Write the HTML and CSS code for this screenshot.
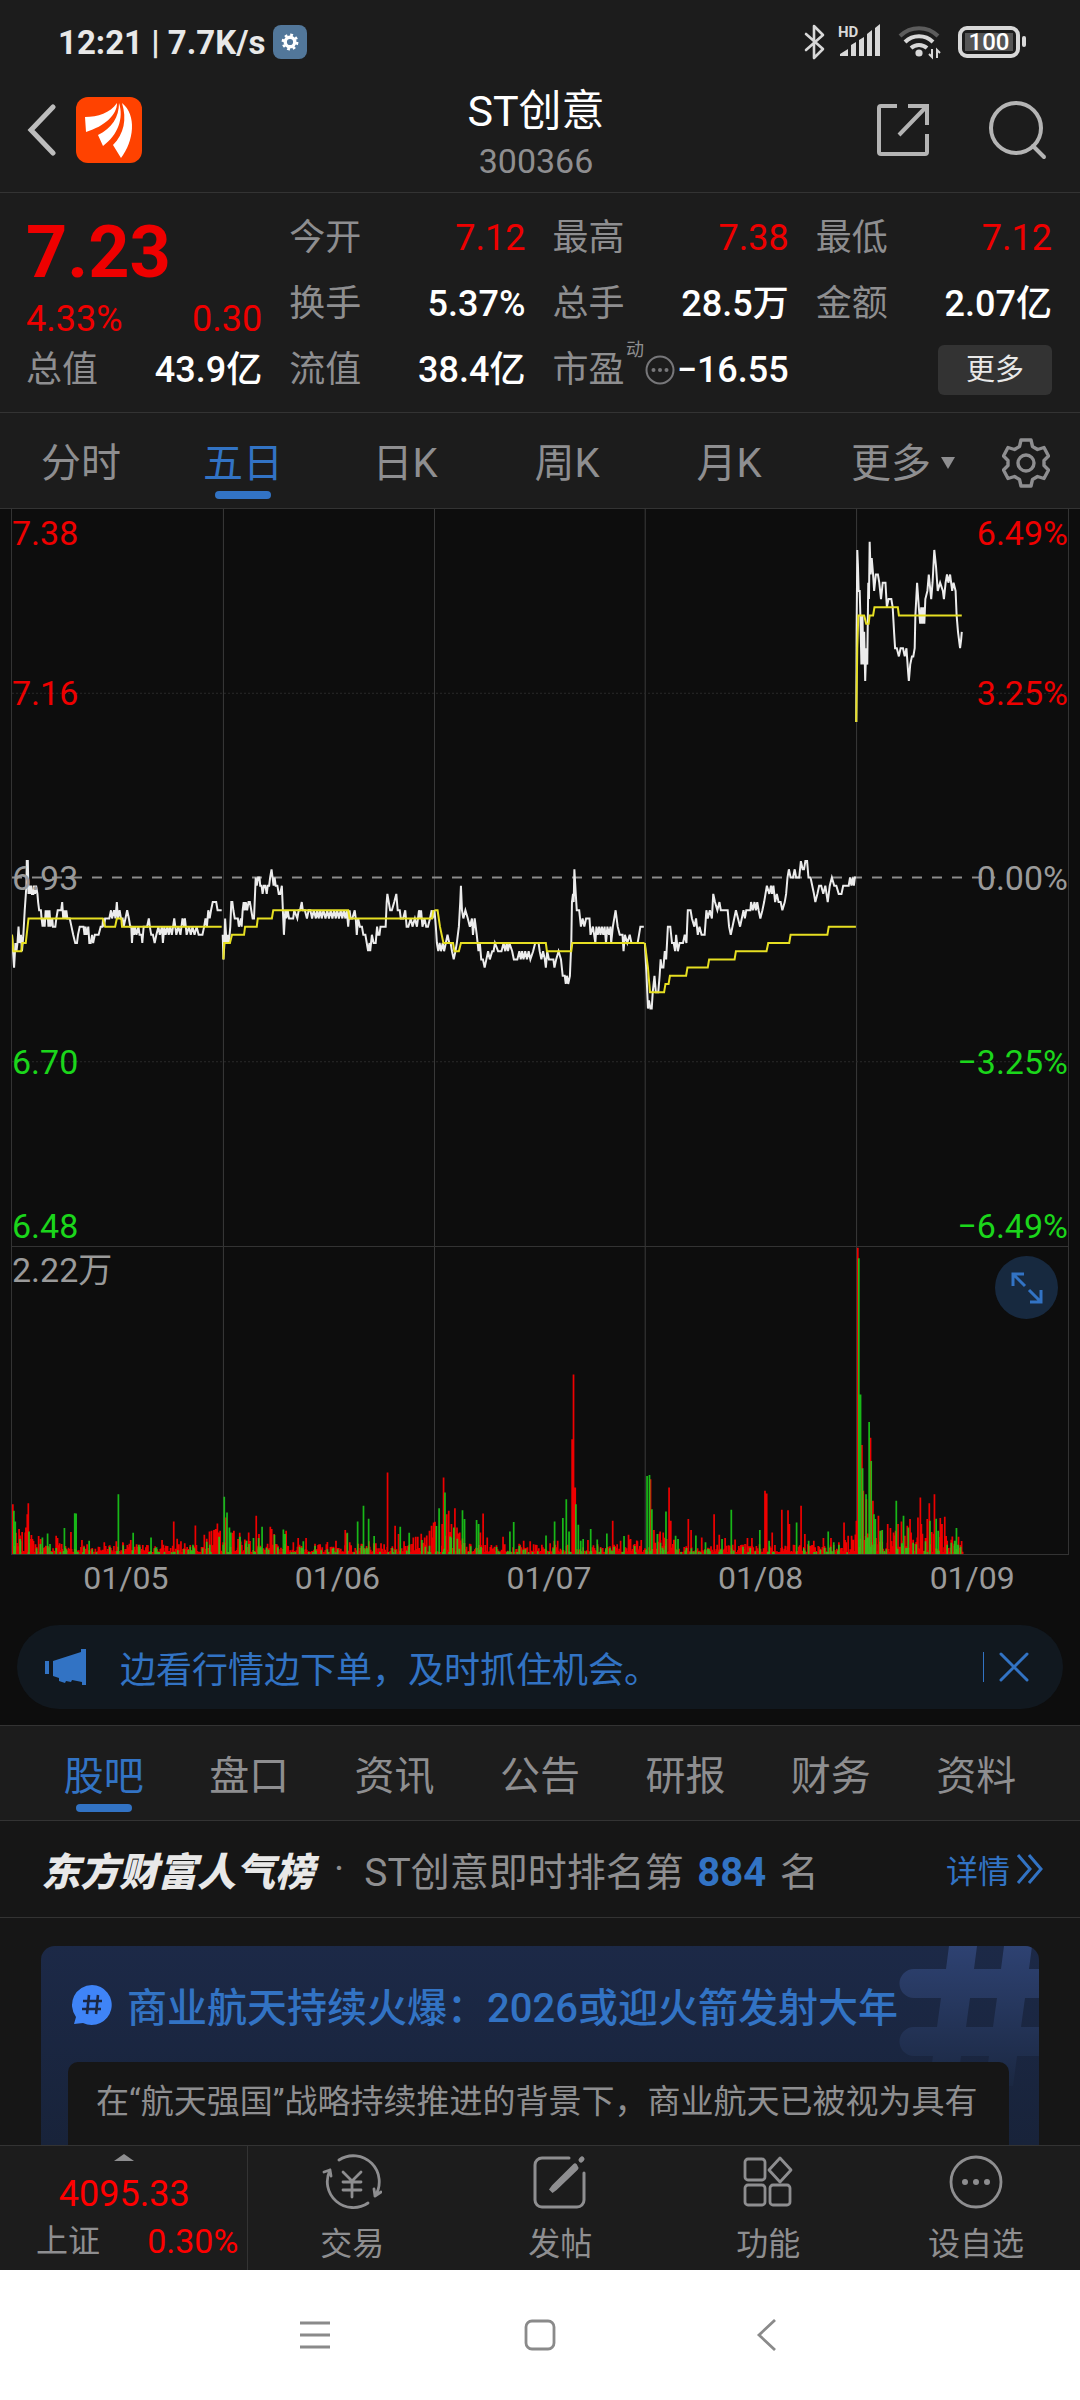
FILE: index.html
```html
<!DOCTYPE html>
<html lang="zh-CN">

<head>
    <meta charset="UTF-8">
    <meta name="viewport" content="width=device-width, initial-scale=1.0">
    <title>ST创意 300366</title>
    <link rel="stylesheet" href="styles.css">
</head>

<body>
    <div class="app">
        <div class="statusbar">
            <span class="time">12:21 | 7.7K/s</span>
            <span class="badge">
                <svg width="18" height="18" viewBox="0 0 18 18"><circle cx="9" cy="9" r="4.8" fill="none" stroke="#fff" stroke-width="3.4"/><circle cx="9" cy="9" r="7.2" fill="none" stroke="#fff" stroke-width="2.4" stroke-dasharray="2.8 2.85"/></svg>
            </span>
            <span class="status-icons">
                <svg width="22" height="36" viewBox="0 0 22 36" fill="none" stroke="#d8d8d8" stroke-width="2.6" stroke-linejoin="round" stroke-linecap="round"><path d="M2 10l17 15-9 9V2l9 9L2 26"/></svg>
                <svg class="signal" width="44" height="36" viewBox="0 0 44 36" fill="#d8d8d8"><text x="0" y="13" class="hd">HD</text><path d="M2 32v-2l8-5v7zM13 32V21l5-3v14zM21 32V16l5-3v19zM29 32V10l5-4v26zM37 32V4l5-4v32z"/></svg>
                <svg class="wifi" width="44" height="36" viewBox="0 0 44 36" fill="none" stroke-width="4"><path d="M2 12a27 27 0 0 1 38 0" stroke="#5c5c5c"/><path d="M7 18a20 20 0 0 1 28 0M13 24a12 12 0 0 1 16 0" stroke="#d8d8d8"/><circle cx="21" cy="29" r="3.6" fill="#d8d8d8"/><path d="M34 25v8l-3-3M39 34v-8l3 3" stroke="#d8d8d8" stroke-width="2"/></svg>
                <span class="battery"><span>100</span></span>
            </span>
        </div>

        <header class="header">
            <div class="header-side">
                <button class="icon-btn" aria-label="返回"><svg width="32" height="54" viewBox="0 0 32 54" fill="none" stroke="#bdbdbd" stroke-width="5" stroke-linecap="round"><path d="M29 4L7 27l22 23"/></svg></button>
                <a class="logo" href="#" aria-label="东方财富"><svg width="66" height="66" viewBox="0 0 66 66"><rect width="66" height="66" rx="12" fill="#ff4200"/><g fill="#fff"><path d="M9 20C22 20 34 16 41 6c0 12-12 23-31 29z"/><path d="M43 6c5 15-1 32-16 43l-5-11C36 31 43 20 43 6z"/><path d="M46 6c15 12 12 38-1 55l-8-13c11-11 14-26 9-42z"/></g></svg></a>
            </div>
            <div class="header-title">
                <h1>ST创意</h1>
                <p>300366</p>
            </div>
            <div class="header-side right">
                <button class="icon-btn" aria-label="分享"><svg width="54" height="54" viewBox="0 0 54 54" fill="none" stroke="#b4b4b4" stroke-width="4"><path d="M21 3H5a2 2 0 0 0-2 2v44a2 2 0 0 0 2 2h44a2 2 0 0 0 2-2V31M32 3h19v19M51 3L23 32"/></svg></button>
                <button class="icon-btn" aria-label="搜索"><svg width="60" height="60" viewBox="0 0 60 60" fill="none" stroke="#b4b4b4" stroke-width="4" stroke-linecap="round"><circle cx="28" cy="28" r="25"/><path d="M45 46l11 11"/></svg></button>
            </div>
        </header>

        <section class="quote">
            <div class="quote-col">
                <strong class="price up">7.23</strong>
                <div class="change up"><span>4.33%</span><span>0.30</span></div>
                <div class="cell"><span>总值</span><b>43.9亿</b></div>
            </div>
            <div class="quote-col">
                <div class="cell"><span>今开</span><b class="up">7.12</b></div>
                <div class="cell"><span>换手</span><b>5.37%</b></div>
                <div class="cell"><span>流值</span><b>38.4亿</b></div>
            </div>
            <div class="quote-col">
                <div class="cell"><span>最高</span><b class="up">7.38</b></div>
                <div class="cell"><span>总手</span><b>28.5万</b></div>
                <div class="cell pe"><span>市盈</span><small>动</small><svg width="30" height="30" viewBox="0 0 30 30"><circle cx="15" cy="15" r="13.5" fill="none" stroke="#77777a" stroke-width="2"/><g fill="#77777a"><circle cx="8.5" cy="15" r="2"/><circle cx="15" cy="15" r="2"/><circle cx="21.5" cy="15" r="2"/></g></svg><b>−16.55</b></div>
            </div>
            <div class="quote-col">
                <div class="cell"><span>最低</span><b class="up">7.12</b></div>
                <div class="cell"><span>金额</span><b>2.07亿</b></div>
                <div class="cell end"><button class="more-btn">更多</button></div>
            </div>
        </section>

        <nav class="tabs period-tabs">
            <button>分时</button>
            <button class="active">五日</button>
            <button>日K</button>
            <button>周K</button>
            <button>月K</button>
            <button class="more-tab">更多<i class="caret"></i></button>
            <button class="gear" aria-label="设置"><svg width="48" height="50" viewBox="0 0 48 50" fill="none" stroke="#8e8e90" stroke-width="3.4" stroke-linejoin="round"><path d="M19 2h10l1.500 6.500 5 3 6.500-2 4.500 8.500-4.500 4.500v5l4.500 4.500-4.500 8.500-6.500-2-5 3L29 48H19l-1.500-6.500-5-3-6.500 2L1.500 32 6 27.500v-5L1.500 18 6 9.500l6.500 2 5-3z"/><circle cx="24" cy="25" r="8"/></svg></button>
        </nav>

        <section class="chart">
            <div class="panel price-panel">
                <svg class="plot" viewBox="0 0 3072 90" preserveAspectRatio="none">
                    <path class="grid-line" d="M615 0V90M1229 0V90M1842 0V90M2457 0V90"/>
                    <path class="grid-dot" d="M0 22.500H3072M0 67.500H3072"/>
                    <path class="mid-line" d="M0 45H2860"/>
                    <g id="lines"></g>
                </svg>
                <div class="axis left">
                    <span class="up">7.38</span><span class="up">7.16</span><span>6.93</span><span class="down">6.70</span><span class="down">6.48</span>
                </div>
                <div class="axis right">
                    <span class="up">6.49%</span><span class="up">3.25%</span><span>0.00%</span><span class="down">−3.25%</span><span class="down">−6.49%</span>
                </div>
            </div>
            <div class="panel volume-panel">
                <svg class="plot" viewBox="0 0 3072 924" preserveAspectRatio="none">
                    <path class="grid-line" d="M615 0V924M1229 0V924M1842 0V924M2457 0V924"/>
                    <path class="bars-up" id="barsUp"/>
                    <path class="bars-down" id="barsDown"/>
                </svg>
                <span class="volume-max">2.22万</span>
                <button class="expand" aria-label="全屏"><svg width="32" height="32" viewBox="0 0 32 32" fill="none" stroke="#3273c4" stroke-width="3"><path d="M13 2H2v12M2 2l12 12M19 30h11V18M30 30L18 18"/></svg></button>
            </div>
            <div class="dates"><span>01/05</span><span>01/06</span><span>01/07</span><span>01/08</span><span>01/09</span></div>
            <div class="notice">
                <svg width="42" height="36" viewBox="0 0 42 36" fill="#3273c4"><path d="M0 12h4v13H0zM8 12L36 3V0h5v36h-4v-3l-10-2-1 2-5-1-1 2-6-2v-3l-6-2z"/></svg>
                <a href="#">边看行情边下单，及时抓住机会。</a>
                <button class="close" aria-label="关闭"><svg width="30" height="30" viewBox="0 0 30 30" fill="none" stroke="#3273c4" stroke-width="3" stroke-linecap="round"><path d="M2 2l26 26M28 2L2 28"/></svg></button>
            </div>
        </section>

        <nav class="tabs info-tabs">
            <button class="active">股吧</button>
            <button>盘口</button>
            <button>资讯</button>
            <button>公告</button>
            <button>研报</button>
            <button>财务</button>
            <button>资料</button>
        </nav>

        <div class="rank">
            <em>东方财富人气榜</em>
            <span class="dot">·</span>
            <span>ST创意即时排名第 <b>884</b> 名</span>
            <a href="#">详情<svg width="28" height="30" viewBox="0 0 28 30" fill="none" stroke="#3273c4" stroke-width="3"><path d="M2 1l12 14L2 29M13 1l12 14-12 14"/></svg></a>
        </div>

        <section class="feed">
            <article class="topic">
                <svg class="hash" width="140" height="140" viewBox="0 0 140 140"><defs><linearGradient id="hashFill" x1="0" y1="0" x2="0" y2="1"><stop offset="0" stop-color="#2e4272"/><stop offset="1" stop-color="#1b2842"/></linearGradient></defs><path fill="url(#hashFill)" d="M50 0h28l-3 23h27l3-23h28l-3 23h10v29h-14l-4 29h18v29h-22l-4 30H86l4-30H62l-4 30H30l4-30H15a14 14 0 0 1 0-29h23l4-29H15a14 14 0 0 1 0-29h32zM71 52l-4 29h27l4-29z"/></svg>
                <h2>
                    <svg width="42" height="42" viewBox="0 0 42 42"><path fill="#3f84f7" d="M21 1a20 20 0 1 1-9 38l-9 1 2-7A20 20 0 0 1 21 1z"/><path stroke="#1b2743" stroke-width="2.600" fill="none" d="M18 11l-2 19M27 11l-2 19M12 17h19M11 25h19"/></svg>
                    <a href="#">商业航天持续火爆：2026或迎火箭发射大年</a>
                </h2>
                <p>在“航天强国”战略持续推进的背景下，商业航天已被视为具有</p>
            </article>
        </section>

        <footer class="toolbar">
            <a class="index" href="#">
                <i class="arrow-up"></i>
                <strong>4095.33</strong>
                <span class="index-row"><span>上证</span><b>0.30%</b></span>
            </a>
            <button class="tool">
                <svg width="60" height="56" viewBox="0 0 60 56" fill="none" stroke="#8e8e90" stroke-width="2.800" stroke-linecap="round" stroke-linejoin="round"><path d="M17 6a26 26 0 0 1 36 36M53 42l-1-7M53 42l6-4M46 49A26 26 0 0 1 8 16M8 16l-6 2M8 16l1 6"/><path d="M21 18l9 9 9-9M30 27v16M21 28h18M21 36h18"/></svg>
                <span>交易</span>
            </button>
            <button class="tool">
                <svg width="56" height="56" viewBox="0 0 56 56" fill="none" stroke="#8e8e90" stroke-width="3" stroke-linecap="round"><path d="M37 4H10a7 7 0 0 0-7 7v35a7 7 0 0 0 7 7h35a7 7 0 0 0 7-7V19"/><path d="M43 12L22 33l-3 4 4-3 21-20M50 5l-1 1" stroke-width="5"/></svg>
                <span>发帖</span>
            </button>
            <button class="tool">
                <svg width="52" height="56" viewBox="0 0 52 56" fill="none" stroke="#8e8e90" stroke-width="2.800" stroke-linejoin="round"><rect x="3" y="5" width="20" height="21" rx="3"/><rect x="3" y="31" width="20" height="20" rx="3"/><rect x="28" y="31" width="20" height="20" rx="3"/><path d="M38 4l11 12-11 12-11-12z"/></svg>
                <span>功能</span>
            </button>
            <button class="tool">
                <svg width="56" height="56" viewBox="0 0 56 56"><circle cx="28" cy="28" r="25" fill="none" stroke="#8e8e90" stroke-width="2.800"/><g fill="#8e8e90"><circle cx="17" cy="28" r="3"/><circle cx="28" cy="28" r="3"/><circle cx="39" cy="28" r="3"/></g></svg>
                <span>设自选</span>
            </button>
        </footer>

        <div class="sysnav">
            <button aria-label="菜单"><svg width="32" height="32" viewBox="0 0 32 32" stroke="#8a8a8a" stroke-width="2.800"><path d="M1 4h30M1 16h30M1 28h30"/></svg></button>
            <button aria-label="主页"><svg width="32" height="32" viewBox="0 0 32 32" fill="none" stroke="#8a8a8a" stroke-width="2.800"><rect x="2" y="2" width="28" height="28" rx="6"/></svg></button>
            <button aria-label="返回"><svg width="32" height="32" viewBox="0 0 32 32" fill="none" stroke="#8a8a8a" stroke-width="2.800"><path d="M26 1L10 16l16 15"/></svg></button>
        </div>
    </div>

    <script src="chart.js"></script>
</body>

</html>
```
FILE: styles.css
```css
* {
    margin: 0;
    padding: 0;
    box-sizing: border-box;
}

body {
    background-color: #1c1c1c;
    color: #8e8e90;
    font-family: Roboto, "Noto Sans CJK SC", sans-serif;
    font-size: 36px;
}

button {
    font: inherit;
    color: inherit;
    background: none;
    border: none;
}

a {
    color: inherit;
    text-decoration: none;
}

svg {
    display: block;
    flex-shrink: 0;
}

.app {
    display: flex;
    flex-direction: column;
    min-height: 100vh;
}

.up {
    color: #ee0000;
}

.down {
    color: #1bd61b;
}

/* status bar */

.statusbar {
    display: flex;
    align-items: center;
    height: 84px;
    padding: 0 60px 0 58px;
    color: #e8e8e8;
}

.time {
    font-size: 33px;
    font-weight: 700;
}

.badge {
    display: flex;
    align-items: center;
    justify-content: center;
    width: 34px;
    height: 34px;
    margin-left: 8px;
    border-radius: 8px;
    background-color: #52779a;
}

.status-icons {
    display: flex;
    align-items: center;
    gap: 12px;
    margin-left: auto;
}

.wifi {
    margin: 0 4px;
}

.hd {
    font-size: 15px;
    font-weight: 700;
}

.battery {
    position: relative;
    padding: 3px;
    border: 4px solid #d8d8d8;
    border-radius: 9px;
}

.battery span {
    display: block;
    width: 48px;
    background-color: #555;
    color: #fff;
    font-size: 24px;
    font-weight: 500;
    line-height: 18px;
    text-align: center;
}

.battery::after {
    content: "";
    position: absolute;
    right: -10px;
    top: 6px;
    width: 4px;
    height: 11px;
    border-radius: 2px;
    background-color: #d8d8d8;
}

/* header */

.header {
    display: flex;
    align-items: center;
    justify-content: space-between;
    height: 109px;
    padding: 0 32px 16px 24px;
    border-bottom: 1px solid #333;
}

.header-side {
    display: flex;
    align-items: center;
    flex: 1;
    gap: 20px;
}

.header-side.right {
    justify-content: flex-end;
    gap: 58px;
}

.header-title {
    padding-top: 6px;
    text-align: center;
}

.header-title h1 {
    color: #fff;
    font-size: 43px;
    font-weight: 400;
    line-height: 56px;
}

.header-title p {
    font-size: 34px;
    line-height: 44px;
}

/* quote */

.quote {
    display: grid;
    grid-template-columns: repeat(4, 1fr);
    column-gap: 27px;
    padding: 12px 28px 9px 26px;
    border-bottom: 1px solid #333;
}

.price {
    display: block;
    font-size: 72px;
    line-height: 96px;
}

.change {
    display: flex;
    justify-content: space-between;
    line-height: 36px;
}

.cell {
    display: flex;
    align-items: center;
    justify-content: space-between;
    height: 66px;
    line-height: 66px;
    white-space: nowrap;
}

.cell b {
    color: #fff;
    font-weight: 500;
}

.cell b.up {
    color: #ee0000;
    font-weight: 400;
}

.cell.end {
    justify-content: flex-end;
}

.pe small {
    align-self: flex-start;
    font-size: 18px;
    line-height: 26px;
}

.more-btn {
    width: 114px;
    height: 50px;
    border-radius: 6px;
    background-color: #333;
    color: #e8e8e8;
    font-size: 29px;
    line-height: 50px;
}

/* tabs */

.tabs {
    display: grid;
    grid-template-columns: repeat(7, 1fr);
    height: 96px;
    border-bottom: 1px solid #333;
    font-size: 40px;
}

.tabs button {
    display: flex;
    flex-direction: column;
    align-items: center;
    line-height: 60px;
    padding-top: 21px;
}

.tabs .active {
    color: #3273c4;
}

.tabs .active::after {
    content: "";
    width: 56px;
    height: 8px;
    margin-top: -3px;
    border-radius: 4px;
    background-color: #3273c4;
}

.period-tabs {
    grid-template-columns: repeat(6, 1fr) 108px;
}

.period-tabs .more-tab {
    flex-direction: row;
    justify-content: center;
    align-items: flex-start;
    gap: 10px;
    padding-left: 24px;
}

.caret {
    margin-top: 23px;
    border: 7px solid transparent;
    border-top: 12px solid #8e8e90;
    border-bottom: none;
}

.period-tabs .gear {
    justify-content: center;
    padding-top: 4px;
}

.info-tabs {
    padding: 0 31px;
    border-top: 1px solid #333;
}

/* chart */

.chart {
    background-color: #0d0d0d;
    padding: 0 11px 16px;
}

.panel {
    display: grid;
    border: 1px solid #333;
    border-top: none;
    font-size: 34px;
}

.price-panel {
    height: 738px;
    color: #9a9a9a;
}

.volume-panel {
    height: 308px;
    color: #9a9a9a;
}

/* plot and labels share one grid cell */
.panel > * {
    grid-area: 1 / 1;
    min-width: 0;
    min-height: 0;
}

.plot {
    width: 100%;
    height: 100%;
}

.plot path,
.plot polyline {
    vector-effect: non-scaling-stroke;
    fill: none;
}

.grid-line {
    stroke: #3a3a3a;
}

.grid-dot {
    stroke: #2a2a2a;
    stroke-dasharray: 2 2;
}

.mid-line {
    stroke: #8c8c8c;
    stroke-width: 2px;
    stroke-dasharray: 10 10;
}

.plot .avg {
    stroke: #e6df22;
    stroke-width: 2px;
}

.plot .last {
    stroke: #ececec;
    stroke-width: 2px;
}

.plot .bars-up {
    fill: #ee0000;
}

.plot .bars-down {
    fill: #1bd61b;
    fill-opacity: 0.85;
}

.axis {
    display: grid;
    grid-template-rows: 1fr 2fr 2fr 2fr 1fr;
    align-items: center;
    line-height: 40px;
}

.axis.right {
    text-align: right;
}

.axis span:first-child {
    align-self: start;
    padding-top: 4px;
}

.axis span:last-child {
    align-self: end;
}

.volume-max {
    line-height: 46px;
}

.expand {
    display: flex;
    align-items: center;
    justify-content: center;
    justify-self: end;
    width: 63px;
    height: 63px;
    margin: 9px 10px;
    border-radius: 50%;
    background-color: #17293f;
}

.dates {
    display: grid;
    grid-template-columns: repeat(5, 1fr);
    height: 70px;
    font-size: 32px;
    line-height: 46px;
    text-align: center;
    color: #9a9a9a;
}

.dates span {
    padding-left: 18px;
}

.notice {
    display: flex;
    align-items: center;
    height: 84px;
    margin: 0 6px;
    padding: 0 34px 0 28px;
    border-radius: 42px;
    background-color: #11181f;
    color: #3273c4;
}

.notice a {
    flex: 1;
    margin-left: 33px;
}

.close {
    padding-left: 15px;
    border-left: 1px solid #3273c4;
}

/* popularity rank */

.rank {
    display: flex;
    align-items: center;
    height: 97px;
    padding: 0 36px 0 41px;
    border-bottom: 1px solid #333;
    background-color: #161616;
    font-size: 39px;
    white-space: nowrap;
}

.rank em {
    color: #e8e8e8;
    font-weight: 900;
}

.rank .dot {
    margin: 0 20px;
}

.rank b {
    margin: 0 4px;
    color: #3273c4;
    font-size: 40px;
}

.rank a {
    display: flex;
    align-items: center;
    gap: 6px;
    margin-left: auto;
    color: #3273c4;
    font-size: 32px;
}

/* feed */

.feed {
    display: flex;
    flex: 1;
    padding: 28px 41px 0;
    background-color: #161616;
}

.topic {
    position: relative;
    display: flex;
    flex: 1;
    flex-direction: column;
    padding: 29px 30px 0 27px;
    border-radius: 14px 14px 0 0;
    overflow: hidden;
    background: linear-gradient(#1c2947, #18233a);
}

.hash {
    position: absolute;
    top: 0;
    right: 0;
}

.topic h2 {
    position: relative;
    display: flex;
    align-items: center;
    gap: 14px;
    height: 60px;
    margin: 0 0 27px 3px;
    color: #3273c4;
    font-size: 40px;
    font-weight: 500;
    white-space: nowrap;
}

.topic p {
    position: relative;
    flex: 1;
    padding: 16px 20px 18px 28px;
    border-radius: 10px 10px 0 0;
    background-color: #161616;
    font-size: 33px;
    line-height: 48px;
    white-space: nowrap;
}

/* bottom bar */

.toolbar {
    display: flex;
    height: 125px;
    border-top: 1px solid #333;
}

.index {
    display: flex;
    flex-direction: column;
    align-items: center;
    width: 23%;
    padding: 8px 9px 0 36px;
    border-right: 1px solid #333;
    color: #f00;
}

.index strong {
    padding-right: 26px;
    font-weight: 400;
    line-height: 66px;
}

.arrow-up {
    margin-right: 26px;
    border: 10px solid transparent;
    border-bottom: 7px solid #8e8e90;
    border-top: none;
}

.index-row {
    display: flex;
    justify-content: space-between;
    align-self: stretch;
    font-size: 34px;
    line-height: 28px;
}

.index-row span {
    color: #8e8e90;
    font-size: 32px;
}

.index-row b {
    font-weight: 400;
}

.tool {
    display: flex;
    flex: 1;
    flex-direction: column;
    align-items: center;
    padding-top: 8px;
    font-size: 32px;
}

.tool span {
    line-height: 68px;
}

.sysnav {
    display: flex;
    justify-content: center;
    height: 130px;
    background-color: #fff;
}

.sysnav button {
    display: flex;
    align-items: center;
    justify-content: center;
    width: 225px;
}
```
FILE: chart.js
```js
// x runs 0..3072 over five sessions, y is the distance from 6.93 in steps of 0.01
const last = [
    "0,-7 3,-9 6,-11 10,-8 13,-9 16,-8 19,-6 22,-8 26,-7 29,-9 33,-7 37,-4 42,-1 43,2 46,2 48,-2 51,-1 53,-2 56,-1 58,-2 62,-2 64,-1 67,-2 70,-1 74,-2 76,-3 79,-4 84,-4 86,-5 89,-6 92,-5 95,-6 98,-4 100,-5 103,-4 106,-6 109,-4 112,-6 117,-5 119,-6 126,-6 129,-5 133,-4 143,-4 146,-3 149,-5 152,-4 155,-5 158,-4 161,-5 168,-5 173,-6 178,-7 184,-8 189,-8 192,-7 197,-6 208,-6 211,-7 214,-6 217,-7 222,-6 225,-8 229,-8 233,-7 236,-8 241,-7 252,-7 258,-6 263,-6 265,-5 268,-6 271,-5 283,-5 288,-4 291,-5 297,-4 301,-5 305,-3 308,-5 313,-4 317,-5 322,-5 325,-6 330,-5 335,-4 340,-5 344,-6 347,-6 349,-8 352,-6 355,-7 358,-6 362,-7 368,-6 371,-7 377,-7 379,-8 383,-6 393,-6 398,-5 401,-6 405,-7 410,-7 415,-8 420,-7 426,-6 430,-7 436,-6 439,-8 443,-6 447,-7 452,-6 456,-7 460,-6 465,-7 472,-5 478,-7 484,-6 490,-7 496,-5 501,-6 503,-5 508,-7 515,-6 520,-7 525,-6 531,-7 537,-6 543,-7 554,-7 559,-6 563,-5 567,-6 571,-4 575,-5 579,-4 584,-3 594,-3 598,-4 610,-4",
    "613,-7 615,-10 618,-8 620,-5 624,-8 628,-7 631,-8 635,-6 638,-3 641,-3 644,-4 648,-5 657,-5 660,-6 666,-5 668,-6 671,-4 674,-3 677,-4 680,-3 684,-4 688,-3 692,-3 696,-4 700,-5 704,-5 706,-3 709,0 712,-1 716,0 720,0 722,-1 726,-1 729,-2 733,-1 737,-1 741,-2 744,-1 748,-1 751,0 755,1 758,0 761,-1 764,0 767,-1 772,-1 776,-2 780,-2 785,-1 788,-4 791,-7 795,-4 798,-5 802,-4 806,-5 818,-5 821,-4 830,-5 834,-4 838,-4 843,-3 846,-4 852,-4 858,-5 863,-4 868,-4 873,-5 878,-4 884,-5 888,-4 892,-5 897,-4 901,-5 906,-4 912,-5 917,-4 922,-5 927,-4 932,-5 937,-4 942,-5 946,-4 951,-5 956,-4 961,-5 965,-4 970,-5 974,-4 978,-6 982,-4 985,-5 990,-5 997,-4 1000,-5 1003,-7 1007,-5 1012,-6 1018,-6 1022,-7 1028,-7 1032,-8 1036,-9 1040,-8 1042,-9 1047,-7 1052,-8 1058,-8 1062,-6 1065,-7 1069,-7 1072,-6 1087,-6 1090,-3 1092,-2 1096,-3 1100,-4 1105,-4 1112,-3 1118,-2 1122,-4 1128,-4 1131,-5 1138,-5 1144,-4 1148,-6 1153,-6 1160,-5 1165,-6 1172,-5 1178,-6 1184,-4 1188,-5 1190,-4 1194,-6 1200,-5 1205,-6 1210,-6 1216,-5 1221,-4 1224,-5 1227,-4",
    "1229,-4 1233,-6 1236,-8 1240,-9 1244,-8 1248,-9 1253,-8 1257,-9 1262,-8 1267,-7 1272,-8 1276,-8 1280,-9 1285,-10 1290,-9 1294,-8 1300,-6 1304,-3 1306,-1 1309,-4 1313,-5 1319,-4 1326,-5 1332,-6 1338,-5 1341,-7 1346,-5 1352,-7 1357,-9 1361,-8 1365,-10 1370,-10 1375,-11 1380,-10 1385,-9 1390,-10 1397,-9 1401,-9 1405,-8 1414,-9 1424,-9 1430,-8 1435,-9 1439,-8 1443,-9 1447,-8 1455,-9 1460,-10 1470,-10 1476,-9 1480,-10 1484,-9 1488,-10 1493,-9 1498,-10 1503,-9 1508,-10 1516,-9 1522,-8 1532,-8 1535,-9 1540,-10 1545,-9 1550,-10 1553,-11 1557,-9 1562,-10 1575,-10 1578,-11 1583,-10 1590,-9 1597,-10 1602,-12 1608,-12 1611,-13 1614,-12 1618,-13 1623,-12 1627,-8 1629,-3 1632,-2 1634,-3 1636,1 1640,-2 1643,-4 1650,-4 1655,-6 1660,-5 1665,-6 1670,-5 1680,-5 1683,-7 1690,-6 1697,-8 1700,-6 1704,-7 1708,-6 1712,-7 1716,-6 1720,-7 1724,-6 1728,-8 1732,-6 1737,-7 1741,-6 1743,-8 1748,-6 1752,-5 1756,-4 1762,-6 1768,-7 1776,-7 1779,-9 1783,-7 1790,-8 1797,-7 1802,-8 1820,-8 1824,-7 1828,-6 1838,-6",
    "1841,-8 1846,-12 1850,-16 1853,-15 1857,-16 1861,-16 1864,-14 1869,-12 1873,-14 1880,-14 1884,-12 1887,-10 1890,-11 1895,-11 1899,-9 1903,-10 1908,-6 1915,-6 1920,-8 1925,-8 1929,-9 1932,-7 1937,-9 1942,-8 1952,-8 1957,-7 1962,-8 1966,-4 1974,-4 1978,-5 1985,-6 1990,-5 1995,-7 2000,-6 2006,-7 2015,-7 2020,-4 2024,-5 2030,-4 2036,-5 2040,-2 2045,-3 2052,-4 2058,-3 2062,-4 2082,-4 2086,-6 2091,-7 2096,-6 2101,-5 2106,-4 2112,-5 2118,-6 2123,-5 2128,-4 2132,-5 2136,-4 2148,-4 2150,-3 2155,-4 2160,-3 2164,-4 2168,-3 2172,-4 2177,-5 2183,-4 2188,-3 2192,-2 2196,-1 2203,-2 2208,-1 2211,-2 2215,-1 2220,-3 2225,-2 2230,-3 2236,-3 2241,-4 2248,-3 2252,-2 2256,0 2260,1 2265,0 2272,0 2277,1 2281,0 2290,0 2295,2 2300,1 2304,1 2308,2 2313,2 2317,0 2323,0 2328,-1 2333,-2 2337,-3 2343,-2 2348,-1 2354,-1 2360,-2 2366,-1 2373,-3 2379,-1 2385,0 2392,-1 2398,-1 2405,-2 2413,-2 2418,-1 2434,-1 2438,0 2442,-1 2446,0 2449,-1 2452,0 2455,0",
    "2456,19 2457,30 2459,40 2461,38 2463,35 2466,35 2468,32 2471,26 2474,32 2477,26 2479,30 2482,24 2485,28 2488,26 2491,36 2493,34 2495,41 2498,37 2501,39 2505,37 2508,35 2513,37 2519,37 2523,36 2528,34 2533,36 2541,36 2545,33 2550,34 2558,34 2562,33 2566,30 2569,28 2574,28 2580,27 2585,28 2592,28 2597,27 2602,28 2607,25 2609,24 2613,26 2618,27 2622,27 2626,28 2628,32 2633,36 2638,33 2642,31 2645,33 2648,31 2651,33 2654,31 2657,34 2663,35 2667,37 2674,34 2678,36 2683,40 2688,38 2693,35 2700,36 2708,35 2711,34 2716,36 2720,37 2724,36 2729,37 2735,35 2739,36 2745,35 2748,32 2752,30 2758,28 2761,29 2763,30"
];

const avg = [
    "0,-7 4,-9 27,-9 30,-8 40,-8 48,-5 264,-5 271,-6 300,-6 305,-5 318,-5 320,-6 610,-6",
    "615,-10 617,-8 634,-8 640,-7 675,-7 678,-6 712,-6 715,-5 756,-5 760,-4 978,-4 982,-5 1222,-5 1226,-4",
    "1229,-4 1238,-4 1245,-6 1255,-8 1283,-8 1287,-9 1300,-9 1306,-8 1553,-8 1556,-9 1627,-9 1630,-8 1840,-8",
    "1841,-8 1850,-11 1856,-14 1897,-14 1901,-13 1910,-13 1914,-12 1961,-12 1965,-11 2024,-11 2028,-10 2102,-10 2106,-9 2195,-9 2200,-8 2261,-8 2265,-7 2372,-7 2376,-6 2455,-6",
    "2456,19 2459,28 2462,32 2479,32 2485,31 2492,31 2495,32 2505,32 2509,33 2577,33 2580,32 2763,32"
];

// volume peaks, "x:height"
const volUp = "0:150 18:75 38:80 42:120 45:153 52:45 58:40 126:55 130:48 136:32 142:30 169:66 201:42 266:35 280:25 301:38 320:35 343:42 434:42 445:25 468:98 478:46 489:38 500:32 531:86 557:58 572:68 578:70 585:72 590:75 595:92 603:70 620:110 640:60 643:70 655:45 662:40 686:65 708:115 716:60 749:82 753:75 760:60 795:70 816:35 830:48 853:48 915:36 940:40 967:72 971:62 980:35 1036:38 1090:245 1112:85 1122:60 1138:38 1165:50 1172:52 1178:52 1198:50 1204:56 1212:70 1218:85 1224:95 1228:97 1249:90 1253:230 1262:120 1268:130 1276:90 1286:138 1292:80 1300:65 1360:65 1368:122 1380:50 1426:52 1486:40 1505:38 1575:40 1585:40 1627:345 1631:540 1636:200 1673:42 1745:100 1768:40 1817:38 1828:42 1855:225 1865:72 1883:68 1892:65 1909:200 1914:100 1965:105 1973:72 2004:50 2040:120 2055:58 2072:48 2101:44 2137:48 2150:48 2188:190 2193:182 2209:65 2237:133 2255:132 2259:90 2293:145 2304:60 2330:40 2358:48 2380:48 2418:95 2430:55 2440:55 2454:100 2458:922 2470:328 2474:190 2483:165 2495:350 2502:160 2518:115 2526:70 2545:90 2553:78 2568:70 2575:90 2585:98 2602:85 2610:105 2633:110 2640:170 2643:90 2660:105 2666:153 2681:180 2698:108 2703:90 2711:112 2718:40";
const volDown = "3:130 7:98 22:38 47:68 80:30 86:50 101:62 108:30 150:78 180:123 184:122 222:40 307:180 350:64 366:28 402:50 418:20 524:28 573:28 615:172 623:125 630:80 634:65 661:52 680:40 700:48 715:48 725:82 761:58 787:74 792:60 845:38 973:64 1003:98 1020:145 1035:106 1051:54 1127:82 1153:64 1190:42 1232:84 1240:138 1257:185 1275:50 1283:80 1308:132 1314:105 1349:102 1355:90 1446:68 1457:96 1474:25 1551:56 1576:98 1600:108 1610:165 1618:68 1638:150 1645:88 1652:40 1659:45 1681:75 1700:44 1728:62 1778:54 1845:235 1852:238 1859:135 1875:60 1900:128 1928:55 1935:45 1987:56 2015:35 2063:45 2090:133 2173:72 2200:40 2280:95 2315:40 2372:68 2388:35 2461:890 2466:480 2472:258 2482:180 2491:397 2497:280 2505:120 2509:105 2523:70 2529:72 2570:160 2591:115 2605:80 2668:100 2686:106 2692:70 2740:40 2745:78 2750:28";

function drawLine(points, name) {
    const line = document.createElementNS("http://www.w3.org/2000/svg", "polyline");
    line.setAttribute("class", name);
    line.setAttribute("points", points.split(" ").map(p => {
        const [x, y] = p.split(",");
        return x + "," + (45 - y);
    }).join(" "));
    document.getElementById("lines").appendChild(line);
}

function bar(x, h) {
    return `M${x} 924v${-h}h5v${h}z`;
}

function peaks(list) {
    return list.split(" ").map(p => {
        const [x, h] = p.split(":");
        return bar(x, h);
    }).join("");
}

last.forEach(day => drawLine(day, "last"));
avg.forEach(day => drawLine(day, "avg"));

// small trades between the peaks
let up = peaks(volUp);
let down = peaks(volDown);
let seed = 7;
for (let x = 0; x < 2764; x += 3) {
    seed = (seed * 1103515245 + 12345) % 2147483648;
    const r = seed / 2147483648;
    const busy = x > 2457 || x % 614 < 90 || x % 614 > 560 ? 60 : 26;
    const h = Math.round(6 + r * r * busy);
    if (Math.floor(r * 1000) % 5 === 0) {
        down += bar(x, Math.round(h * 0.8));
    }
    up += bar(x, h);
}
document.getElementById("barsUp").setAttribute("d", up);
document.getElementById("barsDown").setAttribute("d", down);
```
